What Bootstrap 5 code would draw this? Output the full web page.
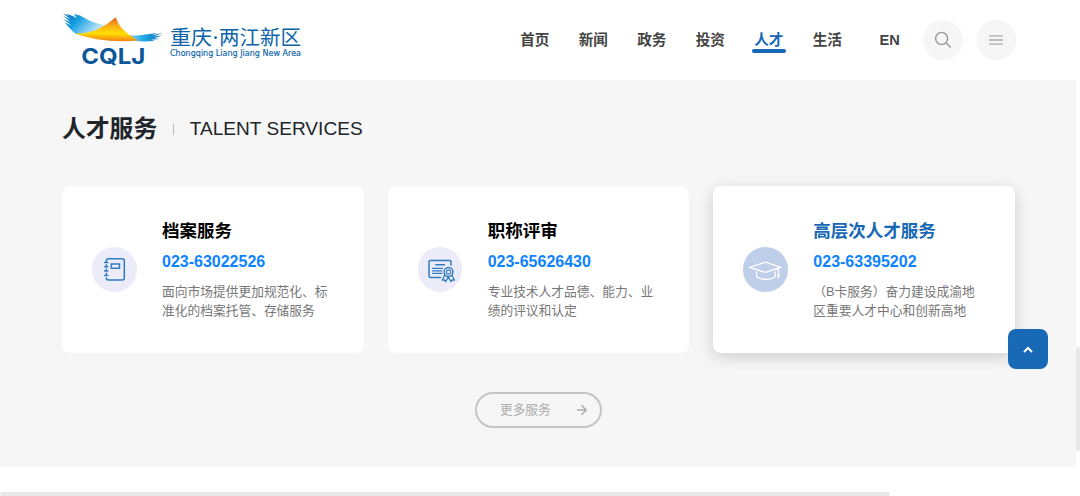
<!DOCTYPE html>
<html lang="zh-CN">
<head>
<meta charset="utf-8">
<meta name="viewport" content="width=device-width, initial-scale=1">
<title>重庆·两江新区</title>
<link rel="stylesheet" href="https://cdn.jsdelivr.net/npm/bootstrap@5.3.0/dist/css/bootstrap.min.css">
<style>
:root{--brand:#1769b5}
html,body{height:100%;overflow:hidden}
body{font-family:"Liberation Sans","Noto Sans CJK SC",sans-serif;background:#fff;color:#212529}
.viewport{width:1076px;height:492px;overflow:hidden}
.site-head{height:79.5px;padding:0 60px 0 62px}
.site-logo{width:240px;height:64px}
.main-nav{gap:24px;margin-right:16px}
.main-nav .nav-link{width:34.5px;padding:0;font-weight:700;font-size:14.6px;line-height:24px;color:#444;text-align:center;white-space:nowrap;height:24px}
.main-nav .nav-link.active{color:var(--brand);position:relative}
.main-nav .nav-link.active::after{content:"";position:absolute;left:0;right:0;bottom:-1px;height:4px;border-radius:2px;background:var(--brand)}
.main-nav .nav-link.lang{margin-left:4px}
.tool-btn{width:39.5px;height:39.5px;background:#f6f6f6;border:0;padding:0}
.services{height:387.5px;background:#f6f6f6;padding:31.5px 61px 0 62px}
.services h2{font-size:23.8px;line-height:36px}
.title-bar{width:1px;height:11px;background:#bbb;margin:0 16px 0 15.5px}
.title-en{font-size:19.1px;line-height:36px}
.service-grid{margin-top:39px;display:grid;grid-template-columns:repeat(3,1fr);gap:24px}
.service-card{height:167px;border:0;border-radius:8px;padding:0 30px}
.service-card.active{box-shadow:0 4px 16px rgba(0,0,0,.17)}
.service-icon{width:44.5px;height:44.5px;background:#ecebfa;color:#2f7dc0}
.active .service-icon{background:#bfcfea;color:#fff}
.service-text{margin-left:25.5px;width:168px;padding-top:32px}
.service-text h3{font-size:17.5px;line-height:26px;color:#000;margin:0;white-space:nowrap}
.active .service-text h3{color:var(--brand)}
.phone{font-size:16px;line-height:20px;font-weight:700;color:#0d83ff;margin-top:8px}
.service-text p{font-size:12.74px;line-height:19.2px;color:#777;margin:10px 0 0}
.more-btn{width:127px;height:36px;border:2px solid #c4c4c4;color:#acacac;font-size:12.7px;line-height:32px;padding:0 13px 0 23px;margin-top:39px}
.to-top{position:fixed;left:1008px;top:329px;width:40px;height:40px;background:var(--brand);border:0;border-radius:8px;padding:0}
.bar-v{position:fixed;right:0;top:347px;width:4px;height:104px;background:#e8e8e8;border-radius:2px}
.bar-h{position:fixed;left:0;bottom:0;width:890px;height:4px;background:#e8e8e8;border-radius:2px}
</style>
</head>
<body>
<div class="viewport">
<header class="site-head d-flex align-items-center">
  <a href="#" class="d-block me-auto">
  <svg class="site-logo d-block" viewBox="62 8 240 64" aria-label="重庆·两江新区">
    <defs>
      <linearGradient id="wingL" x1="0" y1="0" x2="1" y2=".45"><stop offset="0" stop-color="#0867b5"/><stop offset=".4" stop-color="#14a0e2"/><stop offset="1" stop-color="#d8f0fb"/></linearGradient>
      <linearGradient id="wingR"><stop offset="0" stop-color="#bde3f7"/><stop offset=".5" stop-color="#22abe8"/><stop offset="1" stop-color="#0867b5"/></linearGradient>
      <linearGradient id="sail" x1=".55" y1="0" x2=".5" y2="1"><stop offset="0" stop-color="#e65b14"/><stop offset=".3" stop-color="#f7a41c"/><stop offset=".68" stop-color="#ffe000"/><stop offset="1" stop-color="#f47b16"/></linearGradient>
    </defs>
    <path fill="url(#wingL)" d="M63 13.3 L69.5 16.2 66 13.4 72 15.8 77 18 73.8 14 80 15.4 C88 20 96 24.5 108 25.2 L98 33 76 34.3 C72 30.5 69 27.5 64.8 22.4 L71.5 25.5 63.2 19.2 70.5 22 62.9 15.8 70.5 19.4Z"/>
    <path fill="url(#wingR)" d="M123 34.8 C131 36 139 35.6 145 34.4 L157 33 151.5 35.4 162.8 33.1 154 36.4 162.5 35.6 154 38.2 159.8 39 151 39.8 155 41 148 41.3 C140 42 134 41 125 38Z"/>
    <path fill="url(#sail)" d="M75 33.5 C91 34.5 104 27 115.8 17.2 C118 26 127 34.5 138 40.4 C115 42.6 92 39.8 75 33.5Z"/>
    <text x="81.3" y="63.9" textLength="64" lengthAdjust="spacingAndGlyphs" font-family="Inter" font-weight="700" font-size="22" fill="#0c5799">CQLJ</text>
    <g fill="#0d65a8">
      <text x="170" y="45.4" font-family="Noto Sans CJK SC" font-size="20.8" textLength="42" lengthAdjust="spacingAndGlyphs">重庆</text>
      <circle cx="215.6" cy="37.7" r="1.35"/>
      <text x="219" y="45.4" font-family="Noto Sans CJK SC" font-size="20.8" textLength="82" lengthAdjust="spacingAndGlyphs">两江新区</text>
      <text x="170" y="55.6" font-family="DejaVu Sans" font-size="8.1" textLength="131" lengthAdjust="spacingAndGlyphs" stroke="#0d65a8" stroke-width=".15">Chongqing Liang Jiang New Area</text>
    </g>
  </svg></a>
  <nav class="nav main-nav flex-nowrap">
    <a class="nav-link" href="#">首页</a>
    <a class="nav-link" href="#">新闻</a>
    <a class="nav-link" href="#">政务</a>
    <a class="nav-link" href="#">投资</a>
    <a class="nav-link active" href="#">人才</a>
    <a class="nav-link" href="#">生活</a>
    <a class="nav-link lang" href="#">EN</a>
  </nav>
  <div class="d-flex" style="gap:14px">
    <button class="btn tool-btn rounded-circle d-flex align-items-center justify-content-center" aria-label="搜索">
      <svg width="18" height="18" viewBox="0 0 18 18" fill="none" stroke="#999" stroke-width="1.4"><circle cx="7.6" cy="7.4" r="6"/><path d="M12 11.8 16.7 16.4"/></svg>
    </button>
    <button class="btn tool-btn rounded-circle d-flex align-items-center justify-content-center" aria-label="菜单">
      <svg width="14" height="12" viewBox="0 0 14 12" fill="none" stroke="#aaa" stroke-width="1.3"><path d="M0 1.8H14M0 6H14M0 10.2H14"/></svg>
    </button>
  </div>
</header>
<main class="services">
  <div class="d-flex align-items-center">
    <h2 class="fw-bold mb-0">人才服务</h2><span class="title-bar"></span><span class="title-en">TALENT SERVICES</span>
  </div>
  <div class="service-grid">
    <article class="card service-card flex-row">
      <div class="service-icon rounded-circle align-self-center flex-shrink-0">
        <svg class="d-block" width="44.5" height="44.5" viewBox="0 0 44.5 44.5" fill="none" stroke="currentColor" stroke-width="1.5" stroke-linecap="round"><path d="M14.3 15V13.8Q14.3 11.8 16.3 11.8H30.3Q32.3 11.8 32.3 13.8V30.9Q32.3 32.9 30.3 32.9H16.3Q14.3 32.9 14.3 31M14.3 17.8V19M14.3 22V23.2M14.3 26.2V27.4M12.6 15.5H15.8M12.6 19.8H15.8M12.6 24.1H15.8M12.6 28.4H15.8M19.3 17H27.5V21.2H19.3Z"/></svg>
      </div>
      <div class="service-text"><h3 class="fw-bold">档案服务</h3><div class="phone">023-63022526</div><p>面向市场提供更加规范化、标<br>准化的档案托管、存储服务</p></div>
    </article>
    <article class="card service-card flex-row">
      <div class="service-icon rounded-circle align-self-center flex-shrink-0">
        <svg class="d-block" width="44.5" height="44.5" viewBox="0 0 44.5 44.5" fill="none" stroke="currentColor" stroke-width="1.5" stroke-linecap="round" stroke-linejoin="round"><path d="M22.5 30.4H12.4Q11 30.4 11 29V15Q11 13.6 12.4 13.6H31.5Q33 13.6 33 15V18M17.8 17.8H26.5"/><path stroke-width="1.2" d="M14.5 21.3H24.5M14.5 23.8H24M14.5 26.3H24"/><circle cx="30.5" cy="25" r="4.4"/><circle cx="30.5" cy="25" r="2.1" stroke-width="1.1"/><path stroke-width="1.3" d="M26.5 28.5 24.2 33.2 26.5 32.8 27.6 34.7 30.2 30 33 34.7 34.1 32.8 36.5 33.2 34.1 28.5"/></svg>
      </div>
      <div class="service-text"><h3 class="fw-bold">职称评审</h3><div class="phone">023-65626430</div><p>专业技术人才品德、能力、业<br>绩的评议和认定</p></div>
    </article>
    <article class="card service-card active flex-row">
      <div class="service-icon rounded-circle align-self-center flex-shrink-0">
        <svg class="d-block" width="44.5" height="44.5" viewBox="0 0 44.5 44.5" fill="none" stroke="currentColor" stroke-width="1.3" stroke-linecap="round" stroke-linejoin="round"><path d="M6.8 20.3 22.3 15.2 37.8 20.3 22.3 25.4ZM13.6 25V29.5C17.5 33.3 28.5 33.3 32.3 29.5V25M35.5 21.2V30.5"/><path stroke-width="1.8" d="M35.5 27.5V30.3"/></svg>
      </div>
      <div class="service-text"><h3 class="fw-bold">高层次人才服务</h3><div class="phone">023-63395202</div><p>（B卡服务）奋力建设成渝地<br>区重要人才中心和创新高地</p></div>
    </article>
  </div>
  <div class="d-flex justify-content-center">
    <a href="#" class="btn more-btn rounded-pill d-flex align-items-center justify-content-between">更多服务
      <svg width="10" height="12" viewBox="0 0 10 12" fill="none" stroke="currentColor" stroke-width="1.5"><path d="M0 6H9.2M4.5 1.3 9.2 6 4.5 10.7"/></svg>
    </a>
  </div>
</main>
</div>
<button class="btn to-top d-flex align-items-center justify-content-center" aria-label="返回顶部">
  <svg width="10" height="7" viewBox="0 0 10 7" fill="none" stroke="#fff" stroke-width="2"><path d="M1 6 5 2 9 6"/></svg>
</button>
<div class="bar-v"></div><div class="bar-h"></div>
<script src="https://cdn.jsdelivr.net/npm/bootstrap@5.3.0/dist/js/bootstrap.bundle.min.js"></script>
</body>
</html>
